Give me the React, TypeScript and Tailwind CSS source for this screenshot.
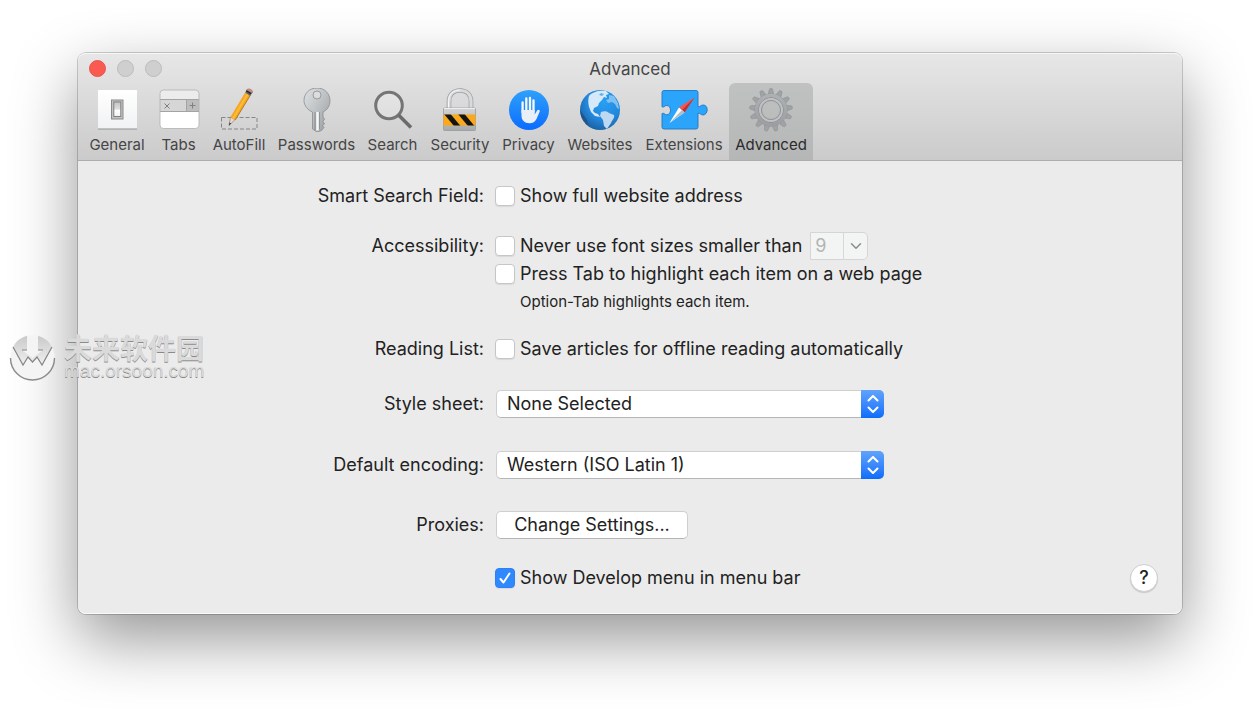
import type { ReactNode } from "react";
import { ChevronDown } from "lucide-react";

/* ─── Toolbar icons ─────────────────────────────────────────────────────────── */
function Icon({ children }: { children: ReactNode }) {
  return (
    <svg width="48" height="44" viewBox="0 0 48 44" fill="none" aria-hidden="true" className="shrink-0">
      {children}
    </svg>
  );
}

const GeneralIcon = () => (
  <Icon>
    <defs>
      <linearGradient id="plate" x1="0" y1="0" x2="0" y2="1">
        <stop offset="0" stopColor="#fff" />
        <stop offset="1" stopColor="#f0f2f3" />
      </linearGradient>
      <linearGradient id="rocker" x1="0" y1="0" x2="0" y2="1">
        <stop offset="0" stopColor="#c4c4c4" />
        <stop offset="0.5" stopColor="#dedede" />
        <stop offset="0.55" stopColor="#fff" />
        <stop offset="1" stopColor="#f2f2f2" />
      </linearGradient>
    </defs>
    <rect x="5" y="2.500" width="39" height="39" fill="#8e9193" />
    <rect x="5" y="2" width="39" height="38.500" fill="url(#plate)" />
    <rect x="18.500" y="12" width="11.500" height="19" fill="#c4c4c4" stroke="#8a8a8a" />
    <rect x="20.800" y="14" width="7" height="14.500" fill="url(#rocker)" stroke="#808080" />
  </Icon>
);

const TabsIcon = () => (
  <Icon>
    <rect x="5" y="2" width="39" height="38.500" rx="3.500" fill="#fff" />
    <path d="M5 12V5.500A3.500 3.500 0 0 1 8.500 2h32A3.500 3.500 0 0 1 44 5.500V12Z" fill="#ececec" />
    <rect x="5" y="12" width="27" height="11" fill="#d6d6d6" />
    <rect x="32" y="12" width="12" height="11" fill="#bdbdbd" />
    <path d="M5 11.500h39M5 23.500h39M31.500 12v11" stroke="#a3a3a3" />
    <path d="m9.500 15.500 5 5m0-5-5 5M37.500 14.500v6m-3-3h6" stroke="#808080" />
    <rect x="5" y="2" width="39" height="38.500" rx="3.500" stroke="#b0b0b0" strokeWidth=".8" />
  </Icon>
);

const AutoFillIcon = () => (
  <Icon>
    <rect x="6.500" y="29.500" width="35.500" height="11.500" stroke="#868686" strokeDasharray="4 2" />
    <path d="m14 37.500 1.500-8.500 4.500 2.700z" fill="#e9d9c4" stroke="#777" strokeWidth=".6" />
    <path d="m14 37.500.5-3 1.700 1z" fill="#333" />
    <path d="m15.500 29 14.700-24.500 5 3L20.300 32z" fill="#f6a623" />
    <path d="m17.200 30 14.700-24.500 1.600 1L18.800 31z" fill="#ffbe36" />
    <path d="m20.300 32 14.900-24.500" stroke="#a56b18" strokeWidth=".8" />
    <path d="m30.200 4.500 1.600-2.700 5.300 3-1.900 3.200z" fill="#5c6269" />
    <path d="m31.200 2.800 5 2.900" stroke="#1f2327" strokeWidth="1.200" />
    <path d="M31.800 1.800C33-.5 39 2 37.400 4.800z" fill="#d18b78" stroke="#9d6659" strokeWidth=".5" />
  </Icon>
);

const PasswordsIcon = () => (
  <Icon>
    <defs>
      <linearGradient id="key" x1="0" y1="0" x2="1" y2="1">
        <stop offset="0" stopColor="#e0e3e5" />
        <stop offset="0.5" stopColor="#bcc0c3" />
        <stop offset="1" stopColor="#969a9c" />
      </linearGradient>
    </defs>
    <path
      fillRule="evenodd"
      d="M24 0c8 0 13 6 13 12.500 0 6-3 9.500-7 11.500v5l1.500 2-1.500 2.500 1.500 2.500-2 1.500 1.500 2-2.500 3L24 44l-4.500-3V24c-4.500-2-8.500-6-8.500-11.500C11 6 16 0 24 0Zm0 3a4 4 0 1 0 0 8 4 4 0 0 0 0-8Z"
      fill="url(#key)"
      stroke="#898d90"
      strokeWidth=".8"
    />
    <path d="M22 24v18" stroke="#868a8d" />
    <path d="M24.500 24v18.500" stroke="#f8f8f8" strokeWidth="2.500" />
    <path d="M26.500 24v17" stroke="#909497" />
  </Icon>
);

const SearchIcon = () => (
  <Icon>
    <circle cx="20" cy="17.500" r="13.300" fill="#fff" fillOpacity=".22" stroke="#757575" strokeWidth="3" />
    <path d="M29.500 27 42 39.500" stroke="#6b6b6b" strokeWidth="3.600" />
  </Icon>
);

const SecurityIcon = () => (
  <Icon>
    <defs>
      <linearGradient id="steel" x1="0" y1="0" x2="0" y2="1">
        <stop offset="0" stopColor="#d2d4d5" />
        <stop offset="1" stopColor="#a7aaab" />
      </linearGradient>
      <clipPath id="band">
        <rect x="7.500" y="26.500" width="32" height="11" />
      </clipPath>
    </defs>
    <path d="M13 21V13.500C13 6.500 17.500 2.500 24 2.500s11 4 11 11V21" stroke="#9b9d9f" strokeWidth="4.600" />
    <path d="M13 21V13.500C13 6.500 17.500 2.500 24 2.500s11 4 11 11V21" stroke="#d8dadb" strokeWidth="3.200" />
    <path d="M12.500 21V13.500C12.500 6.500 17 2 24 2" stroke="#f8f8f8" />
    <rect x="7.500" y="20" width="32" height="22.500" rx="1" fill="url(#steel)" stroke="#929596" strokeWidth=".7" />
    <path d="M8 20.500h31" stroke="#eee" />
    <rect x="7.500" y="26.500" width="32" height="11" fill="#fba819" />
    <g clipPath="url(#band)" fill="#141414">
      <path d="M8 26h6.500l10 12H18z" />
      <path d="M22 26h6.500l10 12H32z" />
    </g>
  </Icon>
);

const PrivacyIcon = () => (
  <Icon>
    <defs>
      <linearGradient id="privacy" x1="0" y1="0" x2="0" y2="1">
        <stop offset="0" stopColor="#2fa1fa" />
        <stop offset="1" stopColor="#0b6cff" />
      </linearGradient>
    </defs>
    <circle cx="24" cy="22" r="20" fill="url(#privacy)" />
    <path
      d="M17.600 24.500V14.500M21.300 23V10.500M25 23V10M28.500 24V12.500"
      stroke="#f7fafc"
      strokeWidth="2.300"
      strokeLinecap="round"
    />
    <path
      d="M16.500 22h13.200v4.500l2.400-4c.9-1.500 3.300-.6 2.600 1L31.500 31c-1.300 2.800-3.800 4.200-7 4.200-5 0-8-3-8-7.700Z"
      fill="#e9eff6"
    />
  </Icon>
);

const WebsitesIcon = () => (
  <Icon>
    <defs>
      <radialGradient id="globe" cx=".6" cy=".3" r=".75">
        <stop offset="0" stopColor="#27a0f5" />
        <stop offset="0.6" stopColor="#2386da" />
        <stop offset="1" stopColor="#1b5e9e" />
      </radialGradient>
      <clipPath id="sphere">
        <circle cx="24" cy="22" r="20" />
      </clipPath>
    </defs>
    <circle cx="24" cy="22" r="20" fill="url(#globe)" />
    <g clipPath="url(#sphere)">
      <path
        d="M13 8c3-4 10-6 17-5l3 3-3 1 1 3-3-1-2 3-3 3-1 3-4 2-1 3 2 2 3 1 2 3-5-1-4-4-2-5c-1-4-1-8 0-11Z"
        fill="#d5e9f8"
      />
      <path d="M25 24c3-1 6-1 8 1l5 2c1 3-2 5-3 8l-4 6-3-3-1-6-3-4z" fill="#bcd9f1" />
      <path d="m33 7 5 1 4 7 1 6-2-1-2-4-3-2-4 1-2-3 3-1z" fill="#7fc0f2" />
      <path d="M4 22c0 7 4 12 9 16l-2-6z" fill="#235487" />
      <path d="m25 5 3 1-2 2-3-1z" fill="#5fb0ee" />
    </g>
  </Icon>
);

const ExtensionsIcon = () => (
  <Icon>
    <path
      d="M4 2.500h32a2 2 0 0 1 2 2v14c2 1 2.500-1.500 5-1.500 2.700 0 4.200 2 4.200 4.700S45.500 27 43 27c-2.500 0-3-2.500-5-1.500V39a2 2 0 0 1-2 2H4a2 2 0 0 1-2-2V25.500c2.200-1 2.700 1.300 4.700 1.300 2.300 0 3.800-2 3.800-4.600 0-2.700-1.500-4.700-3.800-4.700-2 0-2.500 2.300-4.700 1.300V4.500a2 2 0 0 1 2-2Z"
      fill="#2ba4fb"
      stroke="#2475c0"
      strokeWidth=".9"
    />
    <path d="M34.500 9.500 19 19.500l5.500 5z" fill="#ff5148" />
    <path d="M34.500 9.500 22 22l2.500 2.500z" fill="#b93535" />
    <path d="M9.500 35 19 19.500l5.500 5z" fill="#fff" />
    <path d="M9.500 35 22 22l2.500 2.500z" fill="#aebfca" />
  </Icon>
);

const TEETH = Array.from({ length: 13 }, (_, i) => (i * 360) / 13);

const AdvancedIcon = () => (
  <Icon>
    <defs>
      <linearGradient id="gear" x1="0" y1="0" x2="0" y2="44" gradientUnits="userSpaceOnUse">
        <stop offset="0" stopColor="#b2b5b7" />
        <stop offset="1" stopColor="#989b9d" />
      </linearGradient>
    </defs>
    {TEETH.map((angle) => (
      <path
        key={angle}
        d="M21 7.500 22.300 1.500q.2-1 1-1h1.400q.8 0 1 1L27 7.500Z"
        fill="#a0a3a5"
        stroke="#8b8e90"
        strokeWidth=".5"
        transform={`rotate(${angle} 24 22)`}
      />
    ))}
    <circle cx="24" cy="22" r="16.300" stroke="#8b8e90" strokeWidth=".6" />
    <circle cx="24" cy="22" r="13" stroke="url(#gear)" strokeWidth="6.400" />
    <circle cx="24" cy="22" r="12.300" stroke="#85888a" strokeWidth=".8" />
    <circle cx="24" cy="22" r="11" stroke="#bfc2c4" strokeWidth="2" />
    <circle cx="24" cy="22" r="9.500" stroke="#85888a" strokeWidth=".8" />
  </Icon>
);

const TOOLBAR = [
  { label: "General", icon: GeneralIcon },
  { label: "Tabs", icon: TabsIcon },
  { label: "AutoFill", icon: AutoFillIcon },
  { label: "Passwords", icon: PasswordsIcon },
  { label: "Search", icon: SearchIcon },
  { label: "Security", icon: SecurityIcon },
  { label: "Privacy", icon: PrivacyIcon },
  { label: "Websites", icon: WebsitesIcon },
  { label: "Extensions", icon: ExtensionsIcon },
  { label: "Advanced", icon: AdvancedIcon, active: true },
];

/* ─── Form controls ─────────────────────────────────────────────────────────── */
function Row({ label, htmlFor, className = "", children }: {
  label?: string;
  htmlFor?: string;
  className?: string;
  children: ReactNode;
}) {
  return (
    <div className={`grid min-h-7 grid-cols-[406fr_687fr] items-center gap-x-[11px] ${className}`}>
      {label ? (
        <label htmlFor={htmlFor} className="text-right">{label}</label>
      ) : (
        <span />
      )}
      <div className="flex items-center">{children}</div>
    </div>
  );
}

function Checkbox({ id, label, checked = false }: { id: string; label: string; checked?: boolean }) {
  return (
    <span className="flex items-center gap-[5px]">
      <span className="relative flex size-5">
        <input
          id={id}
          type="checkbox"
          defaultChecked={checked}
          className="peer size-5 appearance-none rounded border border-[#c6c6c6] bg-white shadow-[0_1px_1px_rgba(0,0,0,0.08)] checked:border-[#2f80f6] checked:bg-[#3088fd]"
        />
        <svg
          className="pointer-events-none absolute inset-0 hidden peer-checked:block"
          width="20"
          height="20"
          viewBox="0 0 20 20"
          fill="none"
        >
          <path d="m5.500 11 3 3.500 6-9" stroke="#fff" strokeWidth="2" strokeLinecap="round" strokeLinejoin="round" />
        </svg>
      </span>
      <label htmlFor={id}>{label}</label>
    </span>
  );
}

function PopUp({ id, value }: { id: string; value: string }) {
  return (
    <div className="relative ml-px h-7 w-full max-w-[388px]">
      <select
        id={id}
        className="h-7 w-full appearance-none rounded-[5px] border border-[#cfcfcf] border-b-[#b5b5b5] bg-white pr-8 pl-[10px]"
      >
        <option>{value}</option>
      </select>
      <span className="pointer-events-none absolute inset-y-0 right-0 flex w-[23px] items-center justify-center rounded-r-[5px] bg-linear-to-b from-[#60a3fb] to-[#0a6cfb]">
        <svg width="12" height="18" viewBox="0 0 12 18" fill="none">
          <path
            d="m1.500 5.500 4.500-4.500 4.500 4.500M1.500 12.500 6 17l4.500-4.500"
            stroke="#fff"
            strokeWidth="2"
            strokeLinecap="round"
            strokeLinejoin="round"
          />
        </svg>
      </span>
    </div>
  );
}

/* ─── Watermark ─────────────────────────────────────────────────────────────── */
function Watermark() {
  return (
    <div className="pointer-events-none absolute top-[333px] left-2 flex items-center gap-2 text-[#dadada]">
      <svg width="48" height="48" viewBox="0 0 48 48" fill="none" aria-hidden="true">
        <defs>
          <linearGradient id="mark" x1="0" y1="0" x2="0" y2="1">
            <stop offset="0" stopColor="#c9c9c9" />
            <stop offset="1" stopColor="#f0f0f0" />
          </linearGradient>
        </defs>
        <circle cx="24.500" cy="24" r="22" fill="#f4f4f4" />
        <path d="M2.500 25a22 22 0 0 0 44 0" stroke="#8b8b8b" strokeWidth="1.400" />
        <path
          d="M19 2.800A22 22 0 0 0 5 14l10 18 5-8 4.500 5 4.500-5 5 8 10-18A22 22 0 0 0 30 2.800V17h5l-10.500 8L14 17h5Z"
          fill="url(#mark)"
        />
        <path d="m5 14 10 18 5-8 4.500 5 4.500-5 5 8 10-18M14 17h5m11 0h5" stroke="#858585" strokeWidth="1.200" />
      </svg>
      <div className="[text-shadow:0_1px_0_#8a8a8a]">
        <div className="font-['Noto_Sans_CJK_SC',sans-serif] text-[28px] leading-7 font-bold">未来软件园</div>
        <div className="font-['Liberation_Sans',sans-serif] text-[19px] leading-5">mac.orsoon.com</div>
      </div>
    </div>
  );
}

/* ─── Preferences window ────────────────────────────────────────────────────── */
export default function App() {
  return (
    <div className="relative min-h-screen bg-white px-[78px] pt-[53px] pb-[103px] font-['Inter',sans-serif] text-[18px] leading-6 text-[#222]">
      <main className="rounded-lg bg-[#ebebeb] shadow-[0_0_0_1px_rgba(0,0,0,0.18),0_25px_65px_rgba(0,0,0,0.42)]">
        <header className="rounded-t-lg border-b border-[#adadad] bg-linear-to-b from-[#e7e7e7] to-[#cbcbcb] text-[#454545] shadow-[inset_0_1px_0_#f6f6f6]">
          <div className="grid h-[30px] grid-cols-[1fr_auto_1fr] items-center px-[11px]">
            <div className="flex gap-[11px]">
              <button aria-label="Close" className="size-[17px] rounded-full border border-[#e9544b] bg-[#fa5a50]" />
              <button aria-label="Minimize" className="size-[17px] rounded-full border border-[#bcbcbc] bg-[#cfcfcf]" />
              <button aria-label="Zoom" className="size-[17px] rounded-full border border-[#bcbcbc] bg-[#cfcfcf]" />
            </div>
            <h1 className="pt-0.5 text-[17px]">Advanced</h1>
          </div>
          <nav className="grid grid-cols-[68px_55px_66px_89px_63px_72px_65px_78px_90px_84px] px-[5px] text-[15px]">
            {TOOLBAR.map(({ label, icon: ItemIcon, active }) => (
              <button
                key={label}
                className={`flex h-[77px] flex-col items-center rounded-t-md pt-[5px] ${
                  active ? "bg-linear-to-b from-[#c0c1c1] to-[#b5b6b6] text-[#2b2b2b]" : ""
                }`}
              >
                <ItemIcon />
                <span className="pt-px">{label}</span>
              </button>
            ))}
          </nav>
        </header>

        <form
          className="rounded-b-lg pt-[21px] pb-[22px] shadow-[inset_0_-1px_0_#fafafa]"
          onSubmit={(e) => e.preventDefault()}
        >
          <Row label="Smart Search Field:" htmlFor="full-address">
            <Checkbox id="full-address" label="Show full website address" />
          </Row>

          <Row label="Accessibility:" htmlFor="min-font" className="mt-[22px]">
            <Checkbox id="min-font" label="Never use font sizes smaller than" />
            <div className="relative ml-2 h-7 w-[58px]">
              <select
                aria-label="Minimum font size"
                disabled
                className="h-7 w-full appearance-none rounded-r-[5px] border border-[#d5d5d5] bg-[#f3f4f4] pl-1 text-[#b4b4b4] opacity-100"
              >
                <option>9</option>
              </select>
              <span className="pointer-events-none absolute inset-y-px right-px flex w-6 items-center justify-center border-l border-[#d8d8d8] text-[#8c8c8c]">
                <ChevronDown size={18} strokeWidth={2} />
              </span>
            </div>
          </Row>
          <Row>
            <Checkbox id="press-tab" label="Press Tab to highlight each item on a web page" />
          </Row>
          <Row>
            <p className="pl-[25px] text-[15px]">Option-Tab highlights each item.</p>
          </Row>

          <Row label="Reading List:" htmlFor="offline" className="mt-[19px]">
            <Checkbox id="offline" label="Save articles for offline reading automatically" />
          </Row>

          <Row label="Style sheet:" htmlFor="style-sheet" className="mt-[27px]">
            <PopUp id="style-sheet" value="None Selected" />
          </Row>

          <Row label="Default encoding:" htmlFor="encoding" className="mt-[33px]">
            <PopUp id="encoding" value="Western (ISO Latin 1)" />
          </Row>

          <Row label="Proxies:" htmlFor="proxies" className="mt-8">
            <button
              id="proxies"
              type="button"
              className="ml-px h-7 w-48 rounded-[5px] border border-[#cfcfcf] border-b-[#b5b5b5] bg-white leading-6"
            >
              Change Settings...
            </button>
          </Row>

          <Row className="mt-[25px]">
            <Checkbox id="develop" label="Show Develop menu in menu bar" checked />
            <button
              type="button"
              aria-label="Help"
              className="mr-6 ml-auto size-7 rounded-full border border-[#cecece] bg-white leading-6 font-medium shadow-[0_1px_1px_rgba(0,0,0,0.15)]"
            >
              ?
            </button>
          </Row>
        </form>
      </main>
      <Watermark />
    </div>
  );
}
